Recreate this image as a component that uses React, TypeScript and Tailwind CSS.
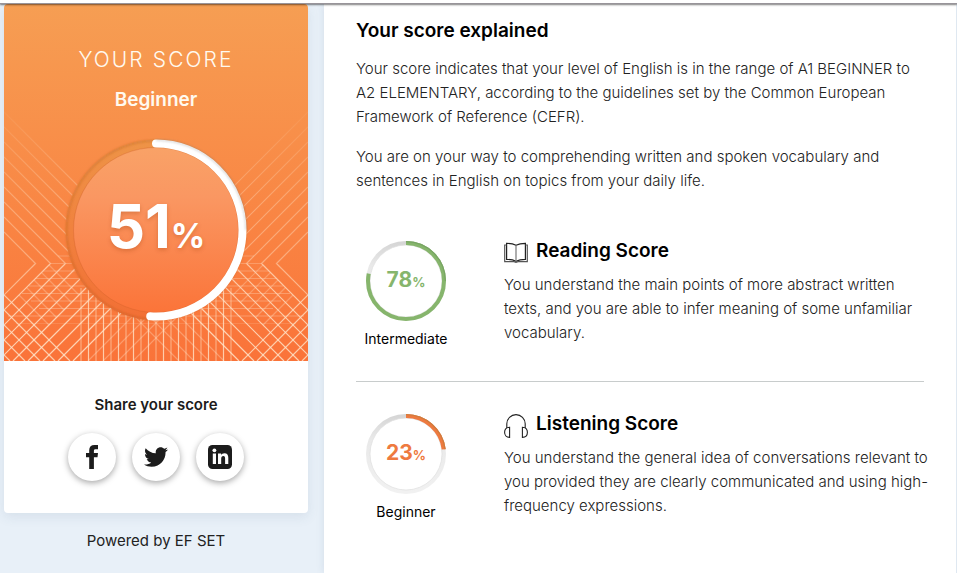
import type { ReactNode } from "react";
import { FaTwitter } from "react-icons/fa";

const range = (from: number, to: number, step: number) => {
  const out: number[] = [];
  for (let v = from; v <= to; v += step) out.push(v);
  return out;
};

/* Left half of the decorative mesh; mirrored around x = 152. */
function MeshHalf() {
  return (
    <g>
      {range(108, 228, 15).map((c) => (
        <path key={`d${c}`} d={`M0 ${c} L${260 - c} 260`} opacity={0.55} />
      ))}
      {range(216, 276, 15).map((c) => {
        const x = (306 - c) / 2;
        return <path key={`f${c}`} d={`M${x} ${c + x} l30 30`} opacity={0.35} />;
      })}
      {range(291, 351, 15).map((c) => (
        <path key={`e${c}`} d={`M0 ${c} L${357 - c} 357`} opacity={0.8} />
      ))}
      {range(291, 486, 15).map((c) => (
        <path key={`u${c}`} d={`M${c - 260} 260 L${c - 357} 357`} opacity={c < 300 ? 0.65 : c > 440 ? 0.35 : 0.85} />
      ))}
      {[54, 46, 39, 31, 25, 18, 27, 35, 4, 12].map((x, i) => (
        <path key={`h${i}`} d={`M${x} ${252 + i * 7.5} H152`} opacity={i > 8 ? 0.15 : 0.35} />
      ))}
      {range(77, 152, 7.5).map((x, i) => (
        <path key={`v${x}`} d={`M${x} 284 V357`} opacity={i === 10 ? 0.25 : i % 2 ? 0.8 : 0.5} />
      ))}
    </g>
  );
}

function Mesh() {
  return (
    <svg
      className="absolute inset-0 h-full w-full"
      viewBox="0 0 304 357"
      preserveAspectRatio="xMidYMax slice"
      aria-hidden="true"
    >
      <defs>
        <linearGradient id="fade" x1="0" y1="0" x2="0" y2="1">
          <stop offset="0.3" stopColor="#fff" stopOpacity="0.1" />
          <stop offset="0.55" stopColor="#fff" stopOpacity="0.65" />
          <stop offset="0.9" stopColor="#fff" />
        </linearGradient>
        <mask id="meshMask" maskUnits="userSpaceOnUse" x="0" y="0" width="304" height="357">
          <rect width="304" height="357" fill="url(#fade)" />
        </mask>
      </defs>
      <g mask="url(#meshMask)" stroke="#ffe3c8" fill="none" strokeWidth="1.2">
        <MeshHalf />
        <g transform="translate(304 0) scale(-1 1)">
          <MeshHalf />
        </g>
      </g>
    </svg>
  );
}

function BigGauge() {
  const r = 86.5;
  const len = 2 * Math.PI * r;
  return (
    <div className="relative grid size-[184px] place-items-center">
      <svg className="absolute inset-0 size-full" viewBox="0 0 184 184" aria-hidden="true">
        <defs>
          <linearGradient id="disc" x1="0" y1="0" x2="0" y2="1">
            <stop offset="0" stopColor="#f9a267" />
            <stop offset="0.3" stopColor="#fa9762" />
            <stop offset="1" stopColor="#fb7439" />
          </linearGradient>
          <linearGradient id="track" x1="0" y1="0" x2="0" y2="1">
            <stop offset="0" stopColor="#ee9447" />
            <stop offset="1" stopColor="#f26f35" />
          </linearGradient>
          <filter id="soft" x="-10%" y="-10%" width="120%" height="120%">
            <feGaussianBlur stdDeviation="1" />
          </filter>
        </defs>
        <circle cx="92" cy="92" r="90.5" fill="url(#track)" />
        <circle cx="92" cy="92" r="89.5" fill="none" stroke="#a8531c" strokeOpacity="0.4" strokeWidth="1.5" filter="url(#soft)" />
        <circle cx="92" cy="92" r="82.5" fill="url(#disc)" />
        <circle cx="92" cy="92" r="82.5" fill="none" stroke="#c95a25" strokeOpacity="0.3" />
        <circle
          cx="92"
          cy="92"
          r={r}
          fill="none"
          stroke="#fff"
          strokeWidth="8"
          strokeLinecap="round"
          strokeDasharray={`${len * 0.51} ${len}`}
          transform="rotate(-90 92 92)"
        />
        <path d="M92 2 A90 90 0 0 1 182 92" fill="none" stroke="#8b8b8b" strokeOpacity="0.4" strokeWidth="1.5" filter="url(#soft)" />
      </svg>
      <p className="relative flex items-baseline pb-2 font-bold text-white [text-shadow:0_2px_4px_rgba(150,60,10,0.3)]">
        <span className="text-[60px] leading-[72px]">51</span>
        <span className="text-[34px]">%</span>
      </p>
    </div>
  );
}

function SmallGauge({ value, color, dark }: { value: number; color: string; dark: string }) {
  const r = 38;
  const len = 2 * Math.PI * r;
  const id = `arc${value}`;
  return (
    <div className="relative grid size-20 place-items-center">
      <svg className="absolute inset-0 size-full" viewBox="0 0 80 80" aria-hidden="true">
        <defs>
          <linearGradient id={id} x1="0" y1="0" x2="0" y2="1">
            <stop offset="0" stopColor="#d6d6d6" />
            <stop offset="0.3" stopColor="#e9e9e9" />
            <stop offset="1" stopColor="#f1f1f1" />
          </linearGradient>
        </defs>
        <circle cx="40" cy="40" r={r} fill="none" stroke={`url(#${id})`} strokeWidth="4" />
        <circle cx="40" cy="40" r="36" fill="none" stroke="#dedede" strokeWidth="0.7" />
        <g transform="rotate(-90 40 40)">
          <circle cx="40" cy="40" r={r} fill="none" stroke={color} strokeWidth="4" strokeDasharray={`${(len * value) / 100} ${len}`} />
          <circle cx="40" cy="40" r="39.4" fill="none" stroke={dark} strokeWidth="1.2" pathLength="100" strokeDasharray={`${Math.min(value, 25)} 100`} />
        </g>
      </svg>
      <p className="relative flex items-baseline font-bold" style={{ color }}>
        <span className="text-[21px] leading-6">{value}</span>
        <span className="text-[13px]">%</span>
      </p>
    </div>
  );
}

function BookIcon() {
  return (
    <svg className="mt-1 size-6 shrink-0" viewBox="0 0 24 24" fill="none" stroke="#222" strokeWidth="1.2" aria-hidden="true">
      <path d="M12 4.200 C9.500 2.900 6.500 2.300 2.600 2.300 V18.300 C6.500 18.300 9.500 18.900 12 20.300 C14.500 18.900 17.500 18.300 21.400 18.300 V2.300 C17.500 2.300 14.500 2.900 12 4.200 Z" />
      <path d="M12 4.200 V20" stroke="#777" />
      <path d="M2.600 4 H0.700 V20.600 H10 L12 21.300 L14 20.600 H23.300 V4 H21.400" stroke="#555" />
    </svg>
  );
}

function HeadphonesIcon() {
  return (
    <svg className="mt-1 size-6 shrink-0" viewBox="0 0 24 24" fill="none" stroke="#222" strokeWidth="1.1" aria-hidden="true">
      <path d="M2.800 14 V9.800 A9.200 9.200 0 0 1 21.200 9.800 V14" />
      <path d="M5.600 13.200 V23.400 C2.300 23.400 0.600 21.200 0.600 18.300 C0.600 15.400 2.300 13.200 5.600 13.200 Z" />
      <path d="M18.400 13.200 V23.400 C21.700 23.400 23.400 21.200 23.400 18.300 C23.400 15.400 21.700 13.200 18.400 13.200 Z" />
    </svg>
  );
}

function FacebookIcon() {
  return (
    <svg className="size-6" viewBox="0 0 24 24" fill="#1c1c1c" aria-hidden="true">
      <path d="M9.200 24 V12.300 H6 V8 H9.200 V5.200 C9.200 1.800 11.200 0 14.400 0 H18 V4.200 H15.600 C14.300 4.200 13.900 4.800 13.900 5.900 V8 H18 L17.500 12.300 H13.900 V24 Z" />
    </svg>
  );
}

function LinkedInIcon() {
  return (
    <svg className="size-6" viewBox="0 0 24 24" aria-hidden="true">
      <rect width="24" height="24" rx="4.500" fill="#1c1c1c" />
      <g fill="#fff">
        <circle cx="6.400" cy="5.300" r="1.900" />
        <rect x="4.800" y="8.500" width="3.200" height="10.500" />
        <path d="M10 8.500 h3.100 v1.500 c0.600-1 1.700-1.800 3.300-1.800 c2.900 0 3.900 1.800 3.900 4.600 V19 h-3.200 v-5.600 c0-1.500-0.400-2.500-1.700-2.500 c-1.500 0-2.200 1-2.200 2.600 V19 H10 Z" />
      </g>
    </svg>
  );
}

function ShareButton({ label, children }: { label: string; children: ReactNode }) {
  return (
    <button
      type="button"
      aria-label={label}
      className="grid size-12 place-items-center rounded-full bg-white text-[#1c1c1c] shadow-[0_2px_6px_rgba(0,0,0,0.35)]"
    >
      {children}
    </button>
  );
}

type SkillProps = {
  title: string;
  icon: ReactNode;
  value: number;
  level: string;
  color: string;
  dark: string;
  children: ReactNode;
};

function Skill({ title, icon, value, level, color, dark, children }: SkillProps) {
  return (
    <section className="flex gap-12">
      <div className="flex w-25 shrink-0 flex-col items-center gap-2 pt-1">
        <SmallGauge value={value} color={color} dark={dark} />
        <p className="text-sm text-black">{level}</p>
      </div>
      <div className="-mr-2 min-w-0 flex-1">
        <h3 className="flex items-center gap-2 text-[19px] leading-7 font-semibold text-black">
          {icon}
          {title}
        </h3>
        <p className="mt-2 font-light">{children}</p>
      </div>
    </section>
  );
}

export default function App() {
  return (
    <div className="flex min-h-screen flex-col bg-[#e8f0f8] font-['Inter','Liberation_Sans',sans-serif] text-[15px] leading-6 text-[#222]">
      <div className="relative z-10 h-1 border-b border-[#98949a] bg-white shadow-[0_1px_2px_rgba(0,0,0,0.5)]" />
      <div className="flex flex-1">
        <aside className="w-[324px] shrink-0 pr-4 pl-1">
          <div className="overflow-hidden rounded bg-white shadow-[0_4px_12px_rgba(60,90,120,0.1)]">
            <div className="relative flex flex-col items-center bg-linear-to-b from-[#f69e53] to-[#fa7339] pt-10 pb-[39px] text-[#fffaf0]">
              <Mesh />
              <h1 className="relative text-[21px] leading-8 font-light tracking-widest">YOUR SCORE</h1>
              <p className="relative mt-2 mb-[22px] text-[19px] leading-8 font-semibold">Beginner</p>
              <BigGauge />
            </div>
            <div className="flex flex-col items-center gap-4 pt-8 pb-8">
              <h2 className="font-semibold text-[#1c1c1c]">Share your score</h2>
              <div className="flex gap-4">
                <ShareButton label="Share on Facebook">
                  <FacebookIcon />
                </ShareButton>
                <ShareButton label="Share on Twitter">
                  <FaTwitter size={24} />
                </ShareButton>
                <ShareButton label="Share on LinkedIn">
                  <LinkedInIcon />
                </ShareButton>
              </div>
            </div>
          </div>
          <p className="mt-4 text-center">Powered by EF SET</p>
        </aside>
        <main className="min-w-0 flex-1 border-r border-[#dfe8f1] bg-white px-8 pt-[13px] shadow-[0_0_8px_rgba(60,90,120,0.12)]">
          <h2 className="text-[19px] leading-7 font-semibold text-black">Your score explained</h2>
          <div className="mt-3 flex flex-col gap-4 font-light">
            <p>
              Your score indicates that your level of English is in the range of A1 BEGINNER to A2 ELEMENTARY, according
              to the guidelines set by the Common European Framework of Reference (CEFR).
            </p>
            <p>
              You are on your way to comprehending written and spoken vocabulary and sentences in English on topics from
              your daily life.
            </p>
          </div>
          <div className="mt-11">
            <Skill title="Reading Score" icon={<BookIcon />} value={78} level="Intermediate" color="#86b56c" dark="#78a563">
              You understand the main points of more abstract written texts, and you are able to infer meaning of some
              unfamiliar vocabulary.
            </Skill>
            <hr className="mt-8 mb-7 border-[#c8cccc]" />
            <Skill title="Listening Score" icon={<HeadphonesIcon />} value={23} level="Beginner" color="#ee7a40" dark="#d07c3c">
              You understand the general idea of conversations relevant to you provided they are clearly communicated and
              using high-frequency expressions.
            </Skill>
          </div>
        </main>
      </div>
    </div>
  );
}
